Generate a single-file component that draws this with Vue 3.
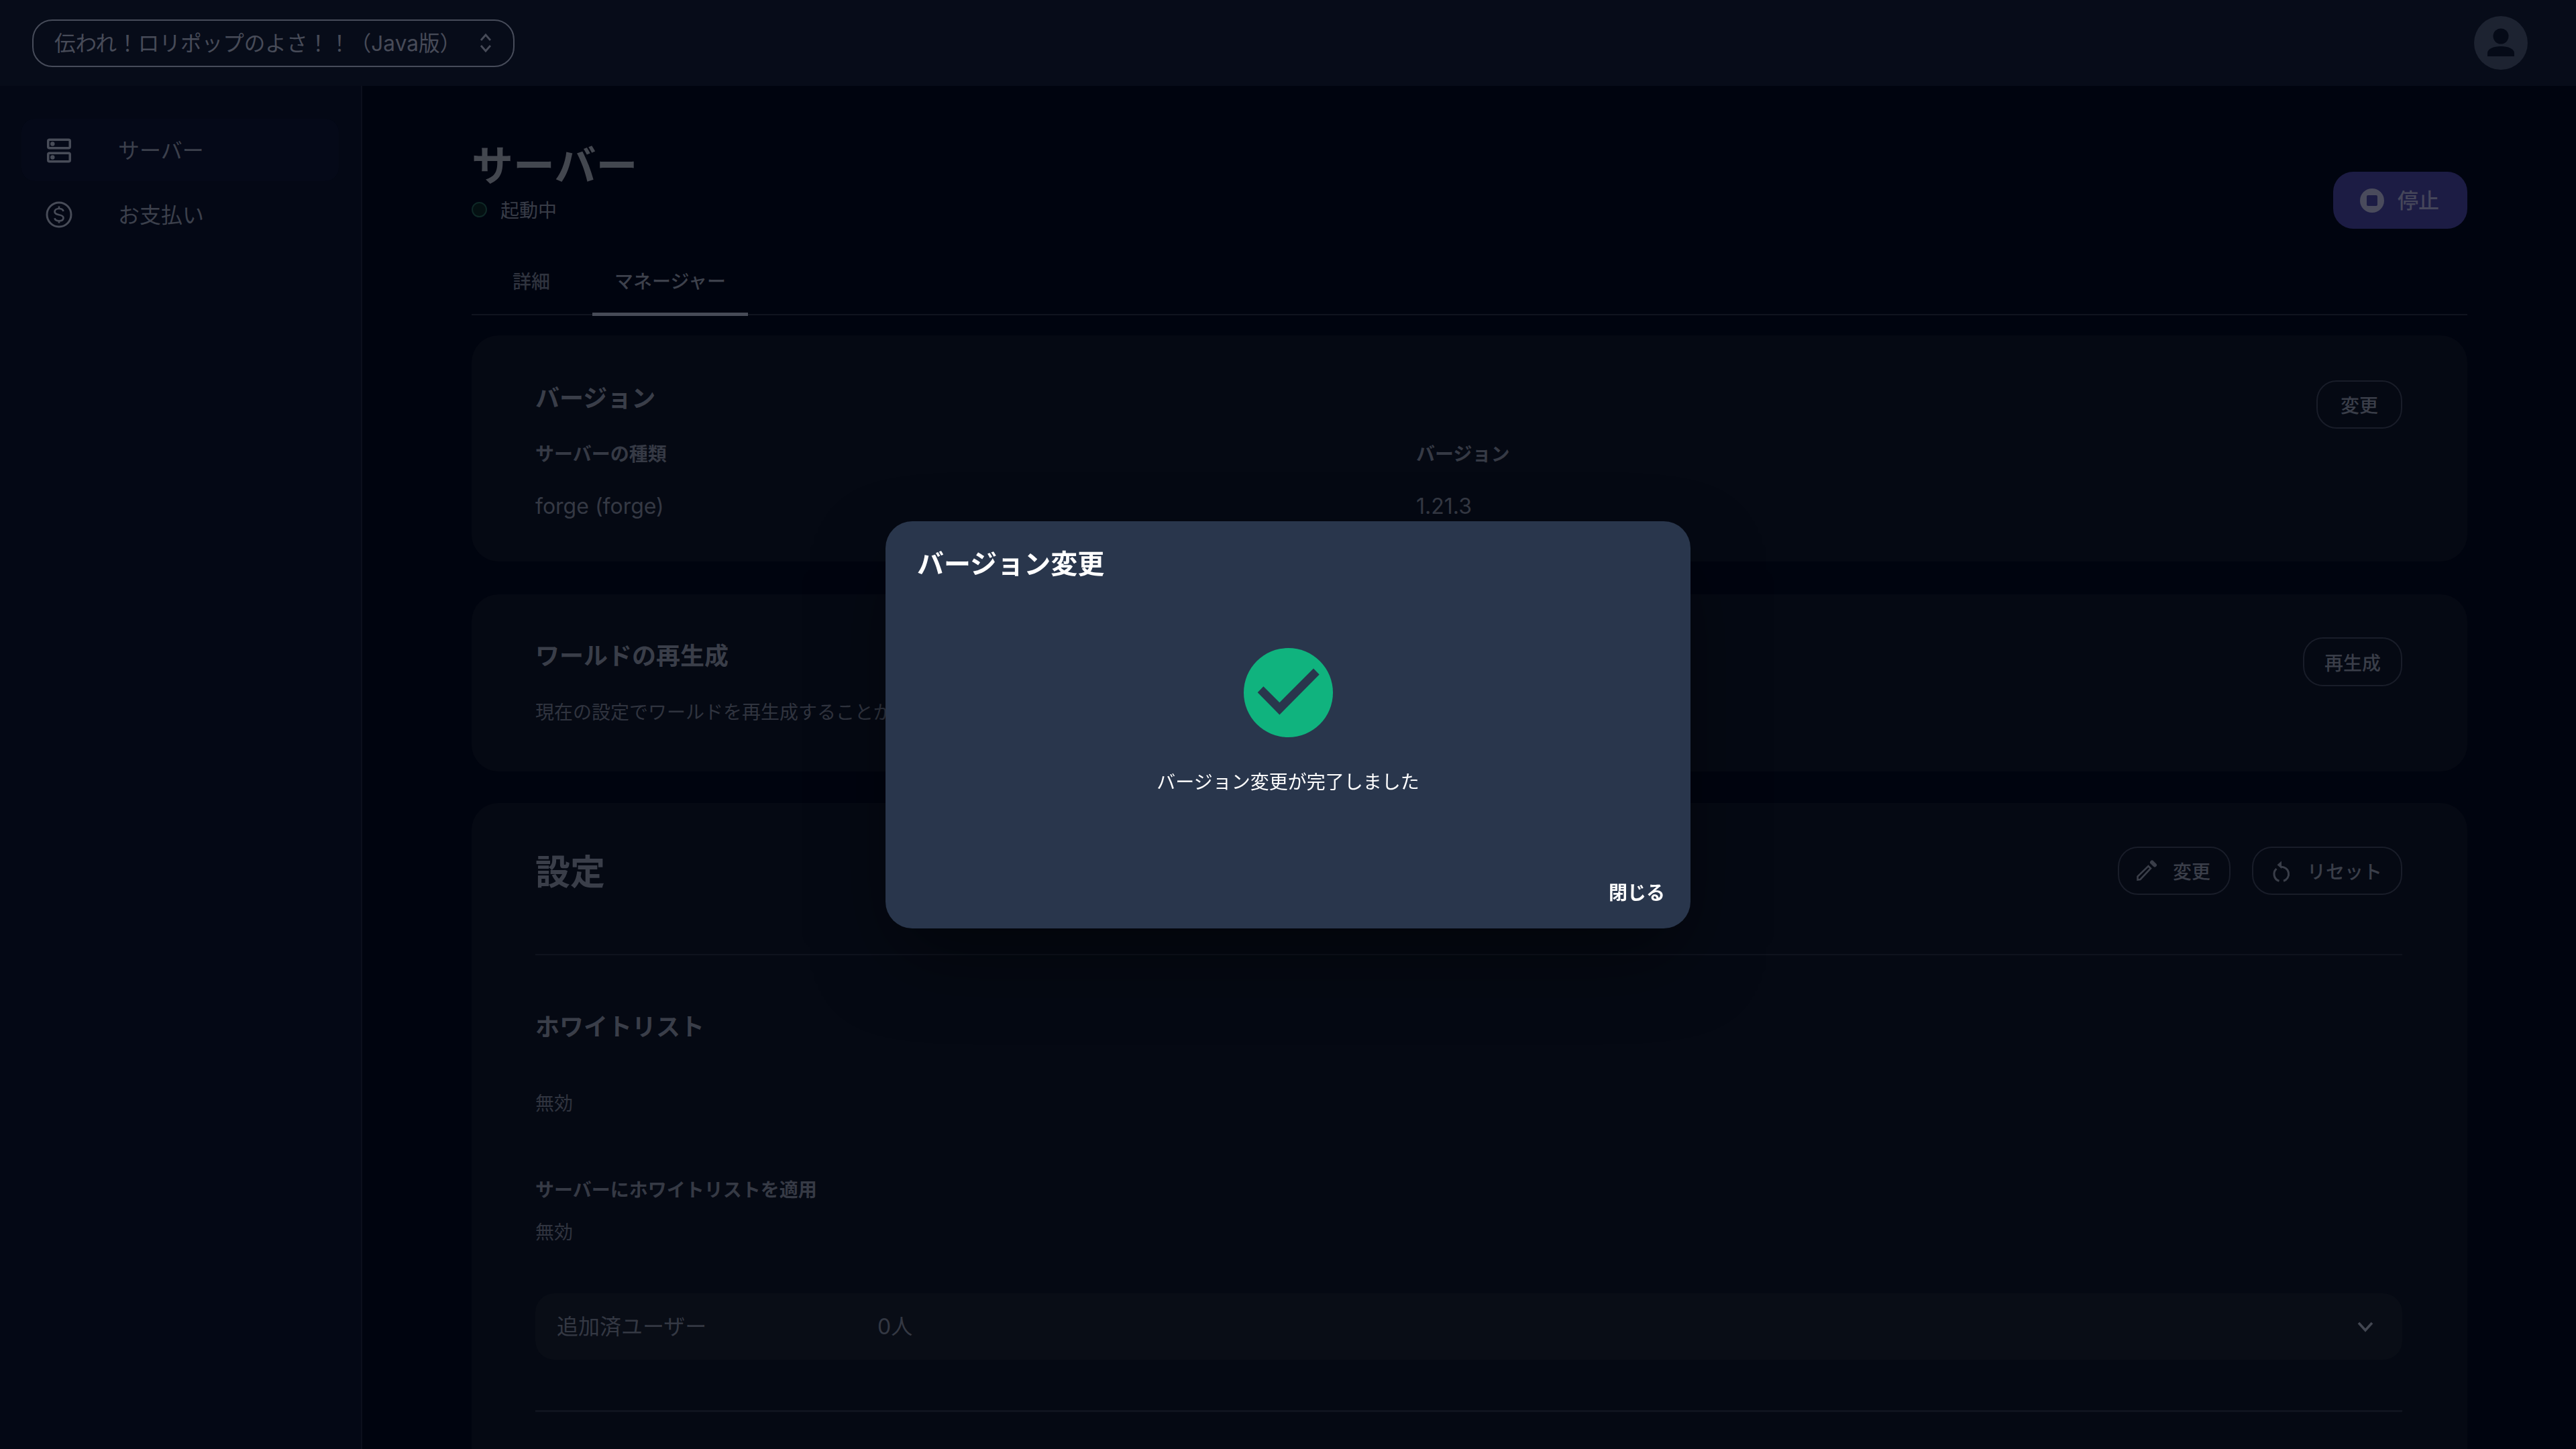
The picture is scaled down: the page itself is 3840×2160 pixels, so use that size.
<template>
  <div class="app">
    <header class="topbar">
      <button class="server-select">
        <span>伝われ！ロリポップのよさ！！（Java版）</span>
        <svg class="updown" viewBox="0 0 18 30" fill="none"><path d="M2 11l7-8 7 8M2 19l7 8 7-8" stroke="currentColor" stroke-width="2.800"/></svg>
      </button>
      <div class="avatar">
        <svg viewBox="0 0 80 80"><circle cx="40" cy="30" r="11.5" fill="#050a17"/><path d="M20 60v-5c0-6 9-10 20-10s20 4 20 10v5z" fill="#050a17"/></svg>
      </div>
    </header>

    <div class="body">
      <aside class="sidebar">
        <div class="nav-item active">
          <svg class="nav-icon" viewBox="0 0 40 40" fill="none" stroke="currentColor" stroke-width="3.500">
            <rect x="3.750" y="4.250" width="32.500" height="12.500" rx="2"/>
            <rect x="3.750" y="24.250" width="32.500" height="12.500" rx="2"/>
            <circle cx="10.300" cy="10.500" r="3.200" fill="currentColor" stroke="none"/>
            <circle cx="10.300" cy="30.500" r="3.200" fill="currentColor" stroke="none"/>
          </svg>
          <span>サーバー</span>
        </div>
        <div class="nav-item">
          <svg class="nav-icon" viewBox="0 0 40 40" fill="none" stroke="currentColor" stroke-width="3">
            <circle cx="20" cy="20" r="18"/>
            <path d="M26.500 15C26 12.500 23.500 11 20 11c-4 0-6.500 2-6.500 4.700C13.500 22 26.500 18.500 26.500 24.700c0 2.800-2.500 4.600-6.500 4.600-3.500 0-6-1.500-6.500-4M20 7.500V11M20 29.300v3.200" stroke-width="2.700"/>
          </svg>
          <span>お支払い</span>
        </div>
      </aside>

      <main class="main">
        <div class="page-head">
          <div>
            <h1>サーバー</h1>
            <div class="status"><i class="dot"></i>起動中</div>
          </div>
          <button class="stop-btn">
            <svg viewBox="0 0 36 36"><circle cx="18" cy="18" r="18" fill="#4a4b5c"/><rect x="10" y="10" width="16" height="16" rx="2" fill="#1c1c44"/></svg>
            <span>停止</span>
          </button>
        </div>

        <nav class="tabs">
          <div v-for="tab in tabs" :key="tab" class="tab" :class="{ current: tab === currentTab }">{{ tab }}</div>
        </nav>

        <section class="card version-card">
          <div class="card-head">
            <h2>バージョン</h2>
            <button class="outline-btn">変更</button>
          </div>
          <div class="version-grid">
            <div class="label">サーバーの種類</div>
            <div class="label">バージョン</div>
            <div class="value">forge (forge)</div>
            <div class="value">1.21.3</div>
          </div>
        </section>

        <section class="card regen-card">
          <div class="card-head">
            <h2>ワールドの再生成</h2>
            <button class="outline-btn">再生成</button>
          </div>
          <p class="desc">現在の設定でワールドを再生成することができます</p>
        </section>

        <section class="card settings-card">
          <div class="card-head settings-head">
            <h2 class="big">設定</h2>
            <div class="head-btns">
              <button class="outline-btn edit-btn">
                <svg viewBox="0 0 30 30" fill="none" stroke="currentColor" stroke-width="2.600">
                  <path d="M1.500 28.500v-5L17.500 8l3.500 3.500L5.500 28z"/>
                  <path d="M23 2.500l4 4" stroke-width="6" stroke-linecap="round"/>
                </svg>
                変更
              </button>
              <button class="outline-btn">
                <svg viewBox="0 0 30 30" fill="none" stroke="currentColor" stroke-width="3">
                  <path d="M13 9.200A10.800 10.800 0 0 1 17 30.300M10.500 30.300A10.800 10.800 0 0 1 6.500 12"/>
                  <path d="M7.500 6.300L14 .5V12z" fill="currentColor" stroke="none"/>
                </svg>
                リセット
              </button>
            </div>
          </div>

          <h2 class="whitelist-title">ホワイトリスト</h2>
          <div class="plain first">無効</div>
          <div class="label apply-label">サーバーにホワイトリストを適用</div>
          <div class="plain second">無効</div>

          <div class="accordion">
            <span class="acc-label">追加済ユーザー</span>
            <span class="acc-count">0人</span>
            <svg class="chevron" viewBox="0 0 24 16" fill="none"><path d="M2 2l10 11L22 2" stroke="currentColor" stroke-width="3.600"/></svg>
          </div>
          <div class="rule"></div>
        </section>
      </main>
    </div>

    <div class="overlay">
      <div class="modal">
        <h3>バージョン変更</h3>
        <svg class="check" viewBox="0 0 133 133">
          <circle cx="66.500" cy="66.500" r="66.500" fill="#10b37e"/>
          <path d="M104 30.500l8.700 9-59.300 60-32.700-33.300 8.700-9 24 24z" fill="#29364c"/>
        </svg>
        <p>バージョン変更が完了しました</p>
        <button class="close-btn">閉じる</button>
      </div>
    </div>
  </div>
</template>

<script setup>
import { ref } from 'vue'
const tabs = ['詳細', 'マネージャー']
const currentTab = ref('マネージャー')
</script>

<style>
html, body { margin: 0; background: #00040f; }
</style>

<style scoped>
.app {
  height: 100vh;
  overflow: hidden;
  display: flex;
  flex-direction: column;
  background: #00040f;
  color: #3a3e49;
  font-family: Inter, "Noto Sans CJK JP", sans-serif;
}
button { font-family: inherit; background: none; border: none; padding: 0; }
h1, h2, h3, p { margin: 0; }

.topbar {
  height: 128px;
  flex: none;
  box-sizing: border-box;
  padding: 0 72px 0 48px;
  background: #070c19;
  display: flex;
  align-items: center;
  justify-content: space-between;
}
.server-select {
  width: 719px;
  height: 71px;
  box-sizing: border-box;
  padding: 0 32px 0 31px;
  border: 2px solid #474c5a;
  border-radius: 30px;
  display: flex;
  align-items: center;
  justify-content: space-between;
  color: #474b58;
  font-size: 31.6px;
}
.server-select span { margin-bottom: 4px; }
.updown { width: 18px; height: 30px; }
.avatar { width: 80px; height: 80px; border-radius: 50%; background: #1d2331; }
.avatar svg { display: block; }

.body { flex: 1; display: flex; min-height: 0; }
.sidebar {
  width: 540px;
  flex: none;
  box-sizing: border-box;
  padding: 49px 33px 0 32px;
  background: #040815;
  border-right: 2px solid #0c101c;
}
.nav-item {
  height: 93px;
  display: flex;
  align-items: center;
  padding-left: 36px;
  gap: 68px;
  font-size: 32px;
  color: #3c404c;
  border-radius: 20px;
}
.nav-item span { margin-bottom: 4px; }
.nav-item.active { background: #050918; margin-bottom: 3px; }
.nav-icon { width: 40px; height: 40px; color: #484c58; flex: none; }

.main { flex: 1; min-width: 0; padding: 80px 162px 0 163px; }
.page-head { display: flex; justify-content: space-between; align-items: flex-start; }
h1 { font-size: 62px; line-height: 80px; font-weight: 700; color: #43474f; }
.status {
  margin-top: 4px;
  height: 40px;
  display: flex;
  align-items: center;
  gap: 20px;
  font-size: 28px;
  color: #383c47;
}
.dot {
  width: 23px;
  height: 23px;
  box-sizing: border-box;
  border-radius: 50%;
  background: #041012;
  border: 2px solid #0e2826;
}
.stop-btn {
  margin-top: 48px;
  width: 200px;
  height: 85px;
  box-sizing: border-box;
  padding-left: 40px;
  border-radius: 30px;
  background: #1c1c44;
  color: #45465a;
  font-size: 31px;
  font-weight: 500;
  display: flex;
  align-items: center;
  gap: 20px;
}
.stop-btn svg { width: 36px; height: 36px; }
.stop-btn span { margin-bottom: 4px; }

.tabs {
  margin-top: 31px;
  height: 98px;
  box-sizing: border-box;
  padding-left: 28px;
  display: flex;
  gap: 30px;
  border-bottom: 2px solid #10141f;
}
.tab {
  height: 101px;
  box-sizing: border-box;
  padding: 28px 33px 0;
  font-size: 28px;
  line-height: 40px;
  font-weight: 500;
  color: #2f333e;
}
.tab.current { color: #3d414c; border-bottom: 5px solid #474b57; height: 99px; }

.card { background: #050913; border-radius: 40px; padding: 0 97px 0 95px; }
.version-card { margin-top: 30px; padding-top: 67px; padding-bottom: 57px; }
.regen-card { margin-top: 49px; padding-top: 64px; padding-bottom: 68px; }
.settings-card { margin-top: 47px; padding-top: 65px; height: 1200px; }

.card-head { display: flex; justify-content: space-between; align-items: flex-start; }
h2 { font-size: 36px; line-height: 54px; font-weight: 700; color: #3a3e49; }
.regen-card h2 { line-height: 56px; }
.big { font-size: 52px; line-height: 78px; }
.head-btns { display: flex; gap: 32px; }
.outline-btn {
  height: 72px;
  box-sizing: border-box;
  padding: 0 28px;
  border: 2px solid #191d29;
  border-radius: 30px;
  font-size: 28px;
  font-weight: 500;
  color: #3a3e49;
  display: flex;
  align-items: center;
  gap: 22px;
}
.outline-btn svg { width: 30px; height: 30px; overflow: visible; }
.edit-btn { padding-left: 26px; gap: 24px; }
.version-card .outline-btn { padding: 0 34px; }
.regen-card .outline-btn { height: 73px; padding: 0 30px; }

.version-grid {
  margin-top: 18px;
  display: grid;
  grid-template-columns: 1313px 1fr;
  row-gap: 33px;
}
.label { font-size: 28px; line-height: 40px; font-weight: 700; color: #363a45; }
.value { font-size: 32px; line-height: 50px; color: #353944; }
.desc { margin-top: 19px; font-size: 28px; line-height: 40px; color: #30343f; }

.settings-head { padding-bottom: 82px; border-bottom: 2px solid #0f131e; }
.whitelist-title { margin-top: 80px; }
.plain { font-size: 28px; line-height: 40px; color: #30343f; }
.plain.first { margin-top: 67px; }
.apply-label { margin-top: 89px; }
.plain.second { margin-top: 23px; }

.accordion {
  margin-top: 71px;
  height: 99px;
  box-sizing: border-box;
  padding: 0 43px 0 32px;
  border-radius: 28px;
  background: #090d16;
  display: flex;
  align-items: center;
  font-size: 32px;
  color: #343843;
}
.acc-label { width: 478px; margin-bottom: 6px; }
.acc-count { flex: 1; margin-bottom: 6px; }
.chevron { width: 24px; height: 16px; color: #434752; }
.rule { margin-top: 75px; height: 3px; background: #10141f; }

.overlay {
  position: fixed;
  inset: 0;
  display: flex;
  align-items: center;
  justify-content: center;
}
.modal {
  width: 1200px;
  box-sizing: border-box;
  padding: 36px 38px 33px 47px;
  border-radius: 40px;
  background: #29364c;
  color: #fff;
  display: flex;
  flex-direction: column;
  box-shadow: 0 50px 120px -20px rgba(0, 0, 0, 0.5);
}
h3 { font-size: 40px; line-height: 56px; font-weight: 600; }
.check { width: 133px; height: 133px; margin: 97px 0 0 486.500px; }
.modal p { margin: 47px 9px 0 0; text-align: center; font-size: 28px; line-height: 40px; }
.close-btn {
  margin-top: 125px;
  align-self: flex-end;
  color: #fff;
  font-size: 28px;
  line-height: 40px;
  font-weight: 600;
}
</style>
